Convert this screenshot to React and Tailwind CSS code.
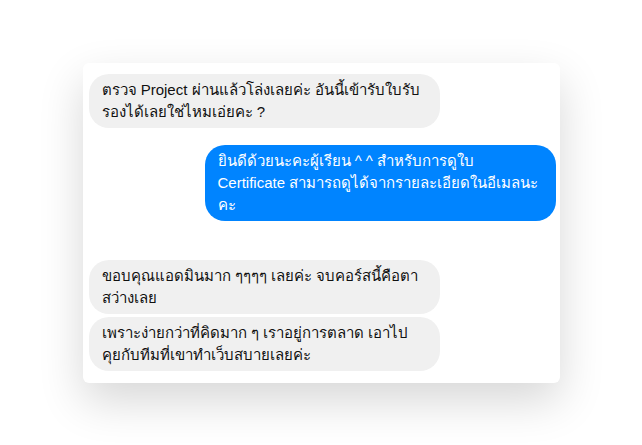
export default function App() {
    const left = 'w-[351px] rounded-[20px] bg-[#f0f0f0] text-[#111] pl-[13px] pr-3 py-[5px]';

    return (
        <div className="w-[642px] h-[445px] bg-white flex items-center justify-center font-['Liberation_Sans',Tahoma,sans-serif] text-[15px] leading-[22px]">
            <div className="w-[477px] h-[320px] bg-white rounded-md shadow-[0_18px_45px_rgba(0,0,0,0.16)] pt-[11px] pl-[6px] pr-[4px] flex flex-col">
                <div className={left}>
                    ตรวจ Project ผ่านแล้วโล่งเลยค่ะ อันนี้เข้ารับใบรับ<br />
                    รองได้เลยใช่ไหมเอ่ยคะ ?
                </div>

                <div className="self-end mt-[17px] w-[351px] rounded-[20px] bg-[#0084ff] text-white pl-[13px] pr-3 py-[5px]">
                    ยินดีด้วยนะคะผู้เรียน ^ ^ สำหรับการดูใบ<br />
                    Certificate สามารถดูได้จากรายละเอียดในอีเมลนะ<br />
                    คะ
                </div>

                <div className={`${left} mt-[39px]`}>
                    ขอบคุณแอดมินมาก ๆๆๆๆ เลยค่ะ จบคอร์สนี้คือตา<br />
                    สว่างเลย
                </div>
                <div className={`${left} mt-[3px]`}>
                    เพราะง่ายกว่าที่คิดมาก ๆ เราอยู่การตลาด เอาไป<br />
                    คุยกับทีมที่เขาทำเว็บสบายเลยค่ะ
                </div>
            </div>
        </div>
    );
}
